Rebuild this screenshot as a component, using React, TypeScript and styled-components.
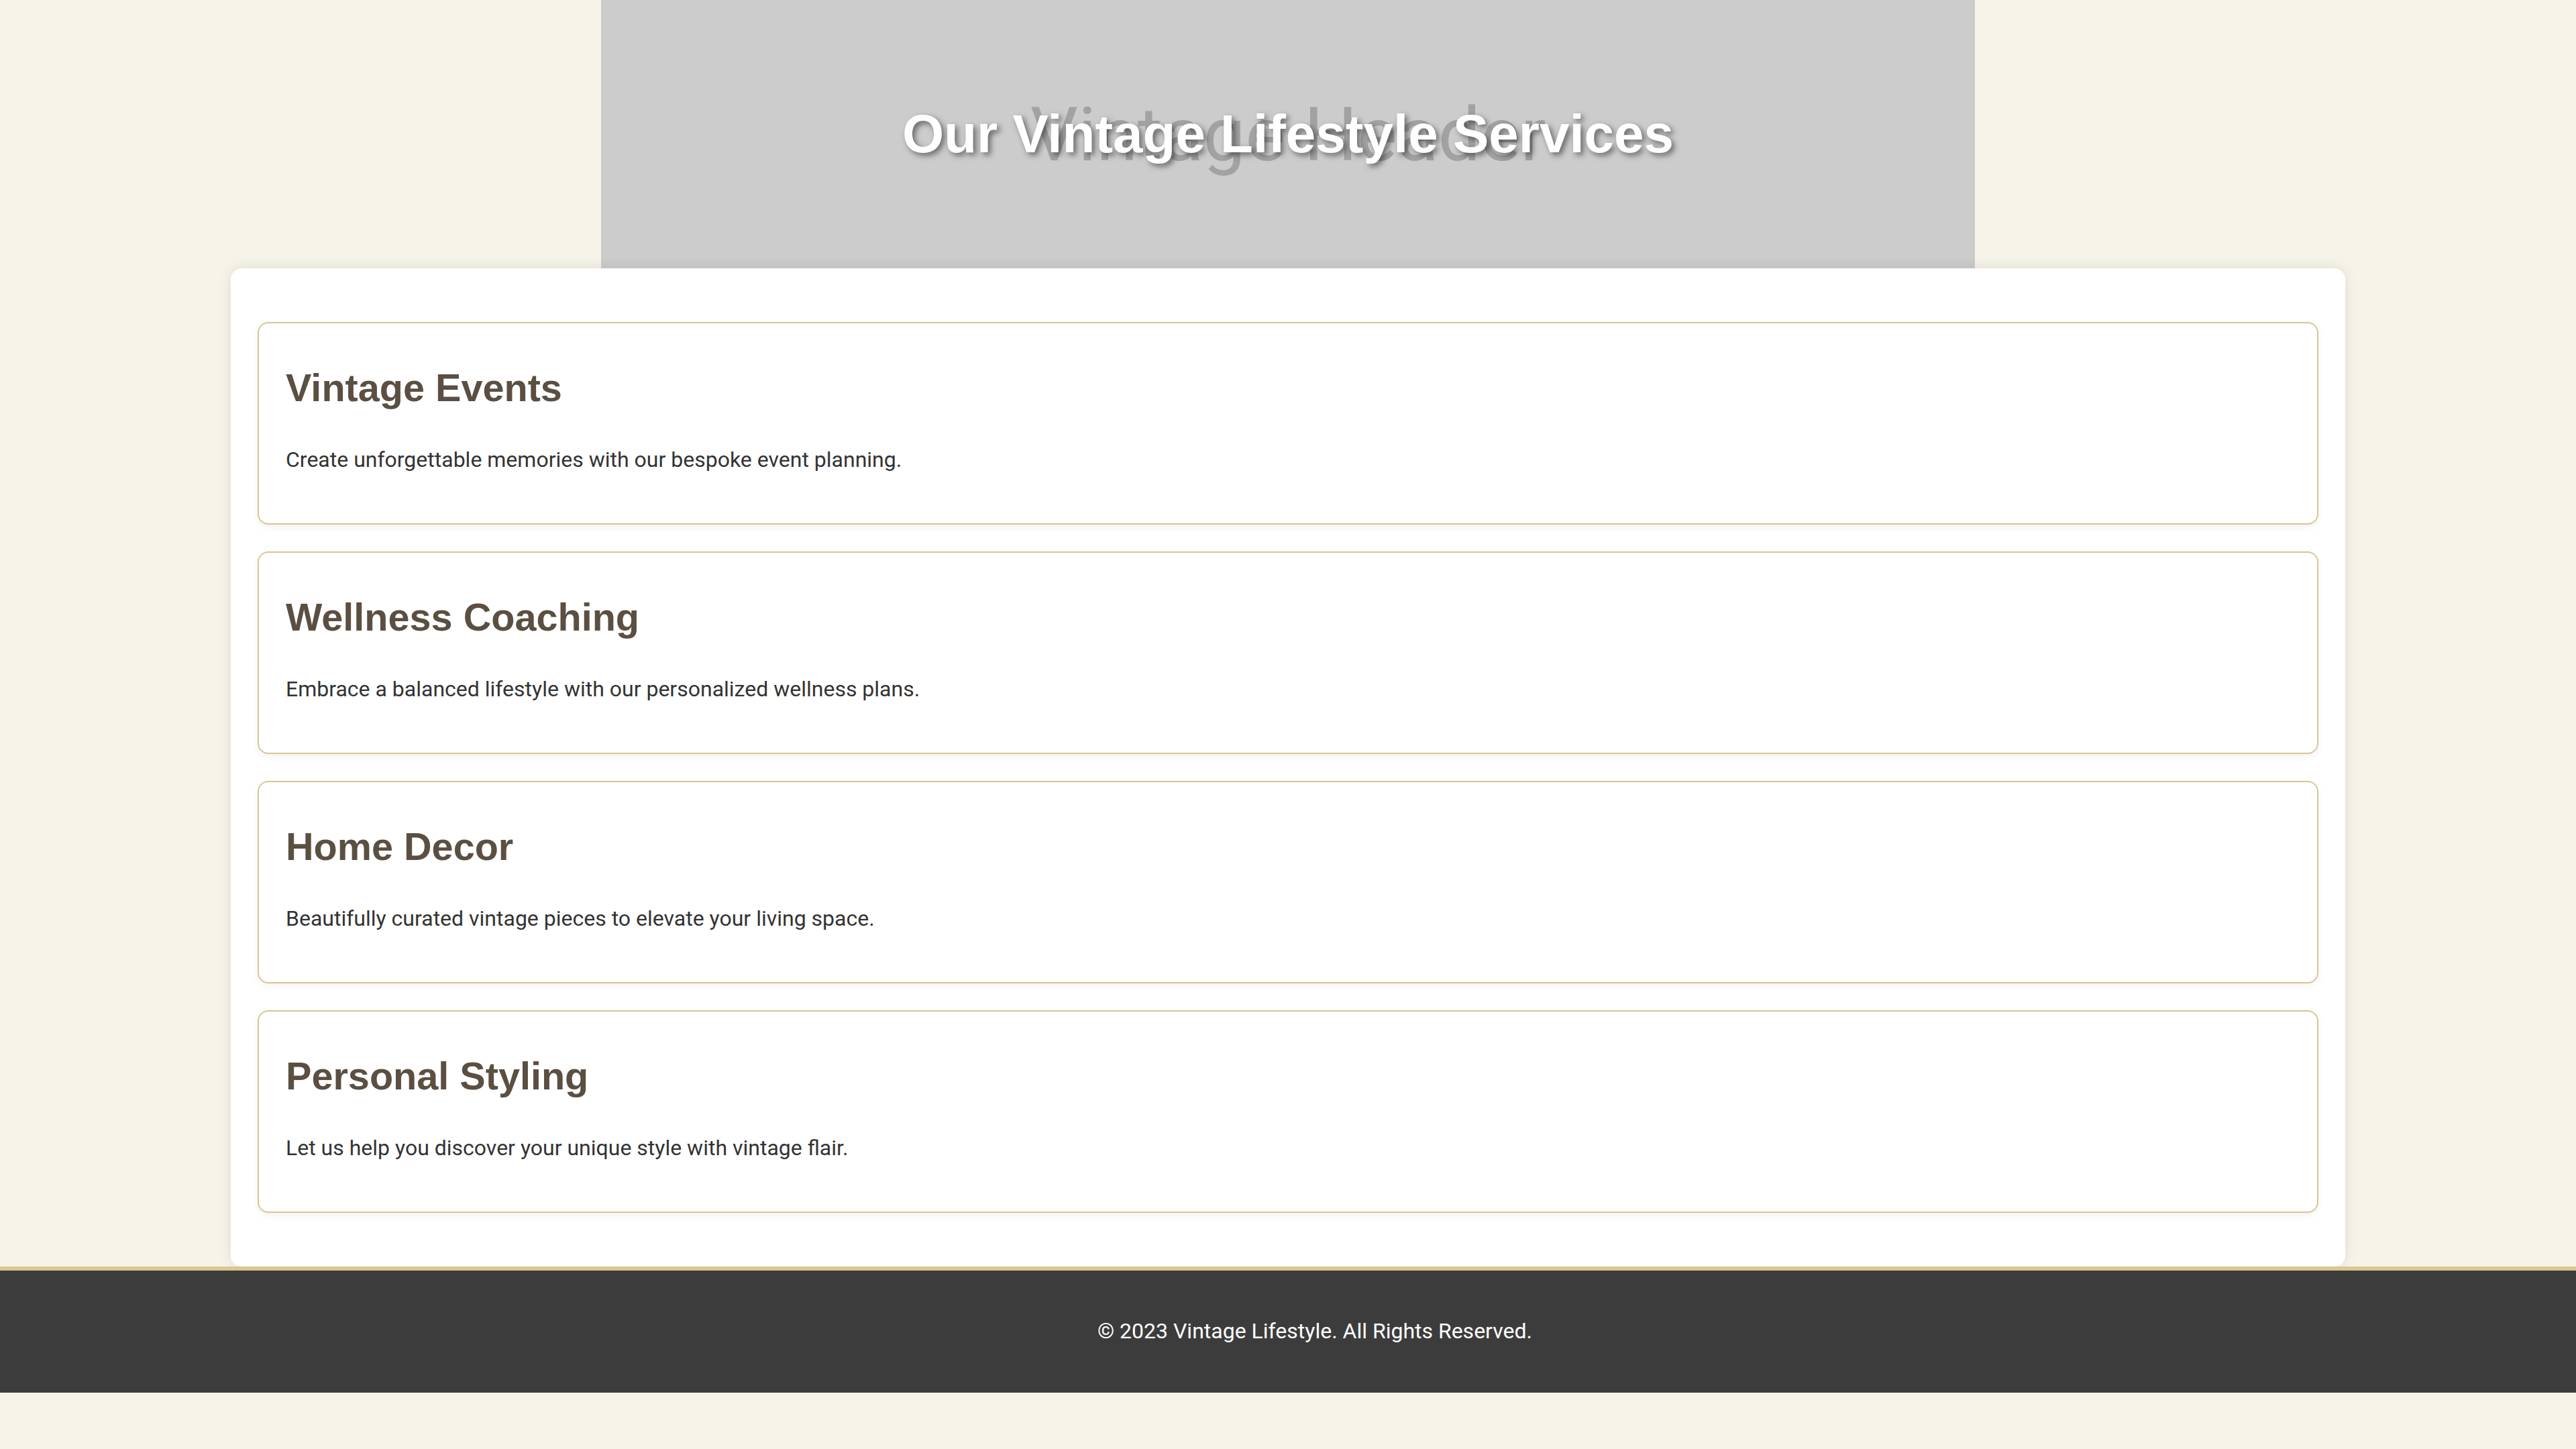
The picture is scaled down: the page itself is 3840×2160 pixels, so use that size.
import React, { FC, ReactElement } from 'react'
import styled, { createGlobalStyle } from 'styled-components'

const GlobalStyle = createGlobalStyle`
  html, body {
    margin: 0;
    padding: 0;
    background: #f6f4e8;
  }

  body {
    font-family: Roboto, "Liberation Sans", Arial, sans-serif;
    color: #333;
    line-height: 1.6;
  }
`

const Header = styled.header`
  width: 2048px;
  height: 400px;
  margin: 0 auto;
  background: #cccccc;
  display: grid;
  place-items: center;
`

// broken header image: only its alt text shows, under the title
const HeaderAlt = styled.span`
  grid-area: 1 / 1;
  font-family: Roboto, sans-serif;
  font-size: 112px;
  line-height: normal;
  color: #a2a2a2;
`

const HeaderTitle = styled.h1`
  grid-area: 1 / 1;
  margin: 0;
  font-family: "Liberation Sans", Arial, sans-serif;
  font-weight: bold;
  font-size: 80px;
  line-height: normal;
  color: #ffffff;
  text-shadow: 4px 4px 8px rgba(0, 0, 0, 0.5);
`

const ServicesPanel = styled.main`
  width: 3152px;
  margin: 0 auto;
  box-sizing: border-box;
  padding: 80px 40px;
  background: #ffffff;
  border-radius: 16px;
  box-shadow: 0 0 20px rgba(0, 0, 0, 0.1);
  display: flex;
  flex-direction: column;
  gap: 40px;
`

const ServiceCard = styled.section`
  border: 2px solid #dcc592;
  border-radius: 16px;
  padding: 40px;
  background: #ffffff;
  box-shadow: 0 4px 12px rgba(0, 0, 0, 0.05);
`

const ServiceTitle = styled.h2`
  margin: 22px 0 0;
  font-family: "Liberation Sans", Arial, sans-serif;
  font-weight: bold;
  font-size: 57.6px;
  line-height: 1.2;
  color: #5b4f42;
`

const ServiceText = styled.p`
  margin: 46.5px 0 29.3px;
  font-size: 32px;
  line-height: 1.6;
  color: #333333;
`

const Footer = styled.footer`
  background: #3c3c3c;
  border-top: 6px solid #dcc592;
  padding: 65px 0 65px 80px;
  text-align: center;
  color: #ffffff;
  font-size: 32px;
  line-height: 1.6;
`

type Service = {
    title: string
    text: string
}

const services: Service[] = [
    { title: 'Vintage Events', text: 'Create unforgettable memories with our bespoke event planning.' },
    { title: 'Wellness Coaching', text: 'Embrace a balanced lifestyle with our personalized wellness plans.' },
    { title: 'Home Decor', text: 'Beautifully curated vintage pieces to elevate your living space.' },
    { title: 'Personal Styling', text: 'Let us help you discover your unique style with vintage flair.' },
]

const App: FC = (): ReactElement => {
    return (
        <>
            <GlobalStyle/>
            <Header>
                <HeaderAlt>Vintage Header</HeaderAlt>
                <HeaderTitle>Our Vintage Lifestyle Services</HeaderTitle>
            </Header>
            <ServicesPanel>
                {services.map(service => (
                    <ServiceCard key={service.title}>
                        <ServiceTitle>{service.title}</ServiceTitle>
                        <ServiceText>{service.text}</ServiceText>
                    </ServiceCard>
                ))}
            </ServicesPanel>
            <Footer>© 2023 Vintage Lifestyle. All Rights Reserved.</Footer>
        </>
    )
}

export default App
